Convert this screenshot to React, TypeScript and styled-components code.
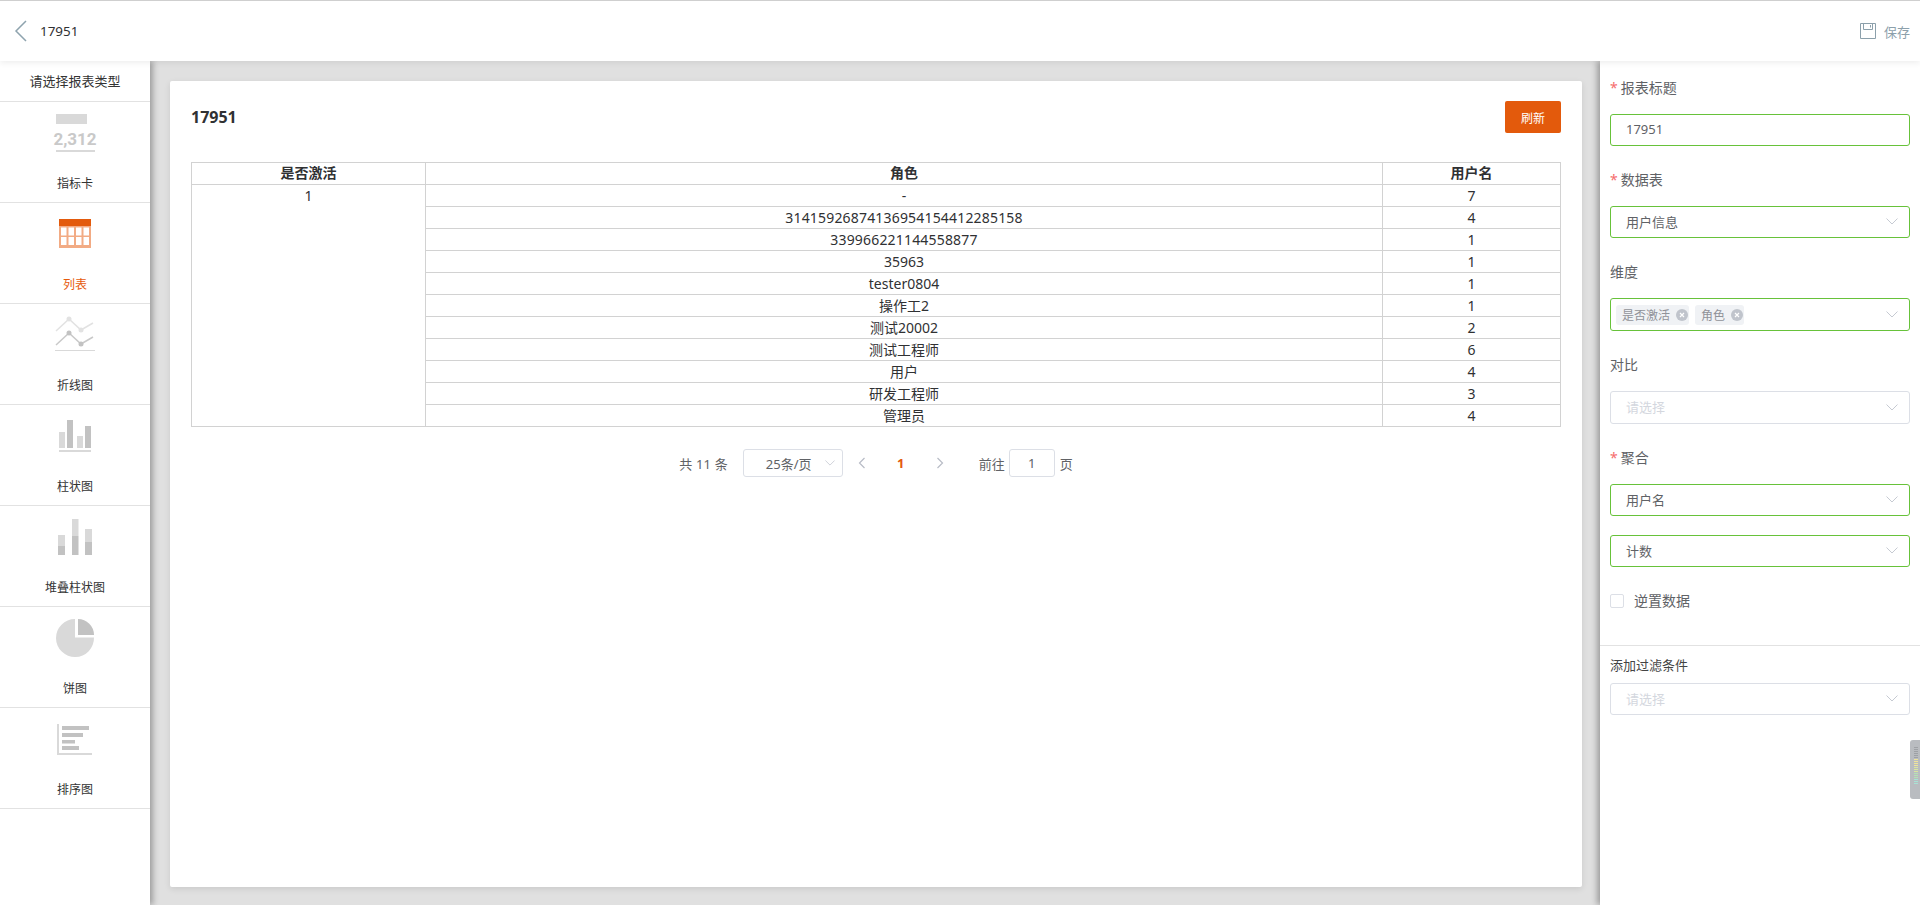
import React from "react";
import styled, { createGlobalStyle } from "styled-components";

const Global = createGlobalStyle`
  html, body { margin: 0; padding: 0; height: 100%; overflow: hidden; background: #fff; }
  body { font-family: "Noto Sans", "Noto Sans CJK SC", sans-serif; color: #303133; }
  * { box-sizing: border-box; }
`;

const Page = styled.div`
  position: relative;
  height: 905px;
  display: flex;
  flex-direction: column;
  overflow: hidden;
`;
const Header = styled.header`
  position: relative;
  z-index: 3;
  height: 61px;
  flex: none;
  border-top: 1px solid #cfcfcf;
  background: #fff;
  box-shadow: 0 2px 6px rgba(0, 0, 0, 0.07);
  display: flex;
  align-items: center;
  padding: 0 10px 0 14px;
`;
const BackIcon = styled.svg`
  width: 13px;
  height: 22px;
  margin-right: 13px;
  flex: none;
`;
const HeaderTitle = styled.span`
  font-size: 13.400px;
  color: #303133;
  flex: 1;
`;
const SaveIcon = styled.svg`
  width: 16px;
  height: 16px;
  margin-right: 8px;
`;
const SaveText = styled.span`
  font-size: 13px;
  color: #8ca0ab;
`;
const Body = styled.div`
  flex: 1;
  display: flex;
  min-height: 0;
`;
const Sidebar = styled.aside`
  position: relative;
  z-index: 2;
  width: 150px;
  flex: none;
  background: #fff;
  box-shadow: 3px 0 6px rgba(0, 0, 0, 0.3);
`;
const SidebarHead = styled.div`
  height: 41px;
  border-bottom: 1px solid #e2e2e2;
  font-size: 13px;
  line-height: 40px;
  text-align: center;
  color: #333;
`;
const TypeItem = styled.div`
  height: 101px;
  border-bottom: 1px solid #e2e2e2;
  padding-top: 8px;
  display: flex;
  flex-direction: column;
  align-items: center;
`;
const TypeIcon = styled.svg`
  width: 44px;
  height: 44px;
  flex: none;
`;
const TypeLabel = styled.span<{ $active?: boolean }>`
  margin-top: 20px;
  font-size: 12px;
  line-height: 20px;
  color: ${(p) => (p.$active ? "#e65a0c" : "#333")};
`;
const Main = styled.main`
  flex: 1;
  min-width: 0;
  background: #e0e0e0;
  padding: 20px 19px 18px 20px;
  display: flex;
`;
const Card = styled.section`
  flex: 1;
  background: #fff;
  border-radius: 2px;
  box-shadow: 0 2px 6px rgba(0, 0, 0, 0.1);
  padding: 20px 21px;
`;
const CardHead = styled.div`
  height: 32px;
  display: flex;
  align-items: center;
  justify-content: space-between;
  margin-bottom: 29px;
`;
const CardTitle = styled.h2`
  margin: 0;
  font-size: 16px;
  font-weight: 700;
  color: #303133;
`;
const RefreshButton = styled.button`
  width: 56px;
  height: 32px;
  border: 0;
  border-radius: 2px;
  background: #e35a0c;
  color: #fff;
  font: inherit;
  font-size: 12px;
  padding: 1px 0 0;
`;
const DataTable = styled.table`
  width: 1369px;
  table-layout: fixed;
  border-collapse: collapse;
  font-size: 14px;
  color: #303133;
  th, td {
    border: 1px solid #d2d2d2;
    height: 22px;
    padding: 1px 0 0;
    line-height: 20px;
    text-align: center;
    vertical-align: top;
    font-size: 14px;
  }
  th { font-weight: 700; padding-top: 0; }
`;
const DigitText = styled.span`
  letter-spacing: 0.18px;
`;
const Pager = styled.div`
  margin-top: 22px;
  display: flex;
  justify-content: center;
  align-items: center;
  height: 28px;
  font-size: 13px;
  color: #606266;
`;
const PagerTotal = styled.span`
  margin-right: 15px;
  word-spacing: 0.5px;
`;
const PageSize = styled.div`
  position: relative;
  width: 100px;
  height: 28px;
  border: 1px solid #dcdfe6;
  border-radius: 3px;
  display: flex;
  align-items: center;
  padding-left: 22px;
`;
const PagerArrow = styled.svg<{ $before?: number; $after?: number }>`
  width: 8px;
  height: 12px;
  flex: none;
  margin-left: ${(p) => p.$before ?? 0}px;
  margin-right: ${(p) => p.$after ?? 0}px;
`;
const PagerCurrent = styled.span`
  font-weight: 700;
  color: #e35a0c;
  width: 70px;
  text-align: center;
`;
const GotoInput = styled.div`
  width: 46px;
  height: 28px;
  border: 1px solid #dcdfe6;
  border-radius: 3px;
  margin: 0 5px 0 4px;
  display: flex;
  align-items: center;
  justify-content: center;
`;
const Panel = styled.aside`
  position: relative;
  z-index: 2;
  width: 320px;
  flex: none;
  background: #fff;
  box-shadow: -3px 0 6px rgba(0, 0, 0, 0.3);
  padding-top: 7px;
`;
const PanelForm = styled.div`
  padding: 0 10px;
`;
const Field = styled.div`
  margin-bottom: 14px;
`;
const Label = styled.label`
  display: block;
  height: 40px;
  line-height: 40px;
  margin-bottom: 6px;
  font-size: 14px;
  color: #606266;
`;
const Star = styled.span`
  color: #f56c6c;
  margin-right: 3px;
`;
const Control = styled.div<{ $valid?: boolean; $tall?: boolean; $spaced?: boolean; $tags?: boolean }>`
  position: relative;
  height: ${(p) => (p.$tall ? 33 : 32)}px;
  margin-top: ${(p) => (p.$spaced ? 19 : 0)}px;
  border: 1px solid ${(p) => (p.$valid ? "#67c23a" : "#dcdfe6")};
  border-radius: 3px;
  display: flex;
  align-items: center;
  gap: 6px;
  padding: ${(p) => (p.$tags ? "0 0 0 5px" : "0 0 2px 15px")};
  font-size: 13px;
  color: #606266;
`;
const Placeholder = styled.span`
  color: #d4d7de;
`;
const Tag = styled.span`
  height: 20px;
  background: #f0f2f5;
  border-radius: 3px;
  display: flex;
  align-items: center;
  gap: 6px;
  padding: 0 1px 0 6px;
  font-size: 12px;
  color: #909399;
`;
const TagClose = styled.svg`
  width: 12px;
  height: 12px;
`;
const Caret = styled.svg`
  position: absolute;
  right: 11px;
  top: 50%;
  margin-top: -4px;
  width: 12px;
  height: 7px;
`;
const SmallCaret = styled(Caret)`
  right: 7px;
  width: 10px;
  height: 6px;
  margin-top: -3px;
`;
const CheckRow = styled.div`
  margin-top: 27px;
  height: 14px;
  display: flex;
  align-items: center;
  gap: 10px;
  font-size: 14px;
  line-height: 12px;
  color: #606266;
`;
const CheckBox = styled.span`
  width: 14px;
  height: 14px;
  border: 1px solid #dcdfe6;
  border-radius: 2px;
`;
const Divider = styled.div`
  height: 1px;
  margin-top: 37px;
  background: #e2e2e2;
`;
const FilterLabel = styled.div`
  height: 37px;
  line-height: 38px;
  font-size: 13px;
  color: #444;
`;
const Handle = styled.div`
  position: absolute;
  right: 0;
  top: 740px;
  z-index: 5;
  width: 10px;
  height: 59px;
  background: #b9bcc0;
  border-radius: 3px 0 0 3px;
  padding: 7px 2px 0 4px;
  display: flex;
  flex-direction: column;
  gap: 1px;
`;
const HandleLine = styled.i<{ $c: string }>`
  display: block;
  height: 1px;
  flex: none;
  background: ${(p) => p.$c};
`;

const ChevronDown = () => (
  <Caret viewBox="0 0 12 7" fill="none" stroke="#c6cad2" strokeWidth="1">
    <path d="M.5.5 6 6l5.500-5.500" />
  </Caret>
);

const TagCloseIcon = () => (
  <TagClose viewBox="0 0 12 12">
    <circle cx="6" cy="6" r="6" fill="#c0c4cc" />
    <path d="M4 4l4 4M8 4l-4 4" stroke="#fff" strokeWidth="1.200" />
  </TagClose>
);

const rows: [string, number][] = [
  ["-", 7],
  ["31415926874136954154412285158", 4],
  ["339966221144558877", 1],
  ["35963", 1],
  ["tester0804", 1],
  ["操作工2", 1],
  ["测试20002", 2],
  ["测试工程师", 6],
  ["用户", 4],
  ["研发工程师", 3],
  ["管理员", 4],
];

const L = "#d9d9d9";
const D = "#c2c2c2";

const types: { label: string; active?: boolean; icon: React.ReactNode }[] = [
  {
    label: "指标卡",
    icon: (
      <>
        <rect x="3" y="4" width="31" height="10" fill="#d9d9d9" />
        <text x="22" y="35" textAnchor="middle" fontFamily="Roboto, sans-serif" fontWeight="700" fontSize="17" fill="#c9c9c9">2,312</text>
        <rect x="3" y="40" width="39" height="2" fill="#d9d9d9" />
      </>
    ),
  },
  {
    label: "列表",
    active: true,
    icon: (
      <>
        <rect x="6" y="8" width="32" height="29" fill="#f2ab84" />
        <rect x="6" y="8" width="32" height="7" fill="#e35a0c" />
        {[0, 1].map((r) =>
          [0, 1, 2, 3].map((c) => (
            <rect key={`${r}-${c}`} x={8 + c * 7.5} y={16.5 + r * 9.5} width="5.500" height="8" fill="#fff" />
          ))
        )}
      </>
    ),
  },
  {
    label: "折线图",
    icon: (
      <>
        <g fill="none" stroke="#e2e2e2" strokeWidth="1.500">
          <path d="M3 19 16 7l12 11 12-7" />
        </g>
        <circle cx="16" cy="7" r="2.500" fill="#e2e2e2" />
        <circle cx="28" cy="18" r="2.500" fill="#e2e2e2" />
        <g fill="none" stroke="#c9c9c9" strokeWidth="1.500">
          <path d="M3 33 16 21l12 11 12-7" />
        </g>
        <circle cx="16" cy="21" r="2.500" fill="#c2c2c2" />
        <circle cx="28" cy="32" r="2.500" fill="#c2c2c2" />
        <rect x="2" y="38" width="40" height="1" fill="#d9d9d9" />
      </>
    ),
  },
  {
    label: "柱状图",
    icon: (
      <>
        <rect x="6" y="19" width="6" height="16" fill={L} />
        <rect x="14" y="7" width="6" height="28" fill={D} />
        <rect x="24" y="23" width="6" height="12" fill={L} />
        <rect x="32" y="13" width="6" height="22" fill={D} />
        <rect x="6" y="37" width="32" height="2" fill={L} />
      </>
    ),
  },
  {
    label: "堆叠柱状图",
    icon: (
      <>
        <rect x="5" y="21" width="7" height="11" fill={L} />
        <rect x="5" y="32" width="7" height="9" fill={D} />
        <rect x="19" y="5" width="6.500" height="17" fill={L} />
        <rect x="19" y="22" width="6.500" height="19" fill={D} />
        <rect x="32" y="15" width="7" height="13" fill={L} />
        <rect x="32" y="28" width="7" height="13" fill={D} />
      </>
    ),
  },
  {
    label: "饼图",
    icon: (
      <>
        <path d="M22 23V4.500A19 19 0 1 0 41 23Z" fill={L} transform="translate(0 -.5)" />
        <path d="M25 4a16 16 0 0 1 16 16H25Z" fill={D} />
      </>
    ),
  },
  {
    label: "排序图",
    icon: (
      <>
        <path d="M4 8h2v29h33v2H4Z" fill={L} />
        <rect x="9" y="10" width="27" height="4" fill={D} />
        <rect x="9" y="17" width="21" height="4" fill={D} />
        <rect x="9" y="24" width="13" height="3.500" fill={D} />
        <rect x="9" y="30" width="17" height="4" fill={D} />
      </>
    ),
  },
];

const handleColors = [
  ...Array(6).fill("#9ea1a5"),
  ...Array(4).fill("#efe49a"),
  ...Array(3).fill("#d9e6a0"),
  ...Array(3).fill("#b4e2b4"),
  ...Array(3).fill("#a8e2d4"),
];

export default function App() {
  return (
    <Page>
      <Global />
      <Header>
        <BackIcon viewBox="0 0 13 22" fill="none" stroke="#8ea3ae" strokeWidth="1.500">
          <path d="M12 1 2 11l10 10" />
        </BackIcon>
        <HeaderTitle>17951</HeaderTitle>
        <SaveIcon viewBox="0 0 16 16" fill="none" stroke="#8ca0ab" strokeWidth="1">
          <path d="M.5.5h15v15H.500Z" />
          <path d="M3.500.5v6h9v-6M10.500 2v2.500" />
        </SaveIcon>
        <SaveText>保存</SaveText>
      </Header>
      <Body>
        <Sidebar>
          <SidebarHead>请选择报表类型</SidebarHead>
          {types.map((t) => (
            <TypeItem key={t.label}>
              <TypeIcon viewBox="0 0 44 44">{t.icon}</TypeIcon>
              <TypeLabel $active={t.active}>{t.label}</TypeLabel>
            </TypeItem>
          ))}
        </Sidebar>
        <Main>
          <Card>
            <CardHead>
              <CardTitle>17951</CardTitle>
              <RefreshButton>刷新</RefreshButton>
            </CardHead>
            <DataTable>
              <colgroup>
                <col width="234" />
                <col width="957" />
                <col width="178" />
              </colgroup>
              <thead>
                <tr>
                  <th>是否激活</th>
                  <th>角色</th>
                  <th>用户名</th>
                </tr>
              </thead>
              <tbody>
                {rows.map(([role, n], i) => (
                  <tr key={role}>
                    {i === 0 && <td rowSpan={rows.length}>1</td>}
                    <td>{/^\d{6,}$/.test(role) ? <DigitText>{role}</DigitText> : role}</td>
                    <td>{n}</td>
                  </tr>
                ))}
              </tbody>
            </DataTable>
            <Pager>
              <PagerTotal>共 11 条</PagerTotal>
              <PageSize>
                25条/页
                <SmallCaret viewBox="0 0 12 7" fill="none" stroke="#c6cad2" strokeWidth="1">
                  <path d="M.5.5 6 6l5.500-5.500" />
                </SmallCaret>
              </PageSize>
              <PagerArrow viewBox="0 0 8 12" fill="none" stroke="#b8bcc6" strokeWidth="1.200" $before={15}>
                <path d="M6.500 1 1.500 6l5 5" />
              </PagerArrow>
              <PagerCurrent>1</PagerCurrent>
              <PagerArrow viewBox="0 0 8 12" fill="none" stroke="#b8bcc6" strokeWidth="1.200" $after={35}>
                <path d="M1.500 1l5 5-5 5" />
              </PagerArrow>
              <span>前往</span>
              <GotoInput>1</GotoInput>
              <span>页</span>
            </Pager>
          </Card>
        </Main>
        <Panel>
          <PanelForm>
            <Field>
              <Label><Star>*</Star>报表标题</Label>
              <Control $valid>17951</Control>
            </Field>
            <Field>
              <Label><Star>*</Star>数据表</Label>
              <Control $valid>用户信息<ChevronDown /></Control>
            </Field>
            <Field>
              <Label>维度</Label>
              <Control $valid $tall $tags>
                <Tag>是否激活<TagCloseIcon /></Tag>
                <Tag>角色<TagCloseIcon /></Tag>
                <ChevronDown />
              </Control>
            </Field>
            <Field>
              <Label>对比</Label>
              <Control $tall><Placeholder>请选择</Placeholder><ChevronDown /></Control>
            </Field>
            <div>
              <Label><Star>*</Star>聚合</Label>
              <Control $valid>用户名<ChevronDown /></Control>
              <Control $valid $spaced>计数<ChevronDown /></Control>
            </div>
            <CheckRow>
              <CheckBox />
              逆置数据
            </CheckRow>
          </PanelForm>
          <Divider />
          <PanelForm>
            <FilterLabel>添加过滤条件</FilterLabel>
            <Control><Placeholder>请选择</Placeholder><ChevronDown /></Control>
          </PanelForm>
        </Panel>
      </Body>
      <Handle>
        {handleColors.map((c, i) => (
          <HandleLine key={i} $c={c} />
        ))}
      </Handle>
    </Page>
  );
}
